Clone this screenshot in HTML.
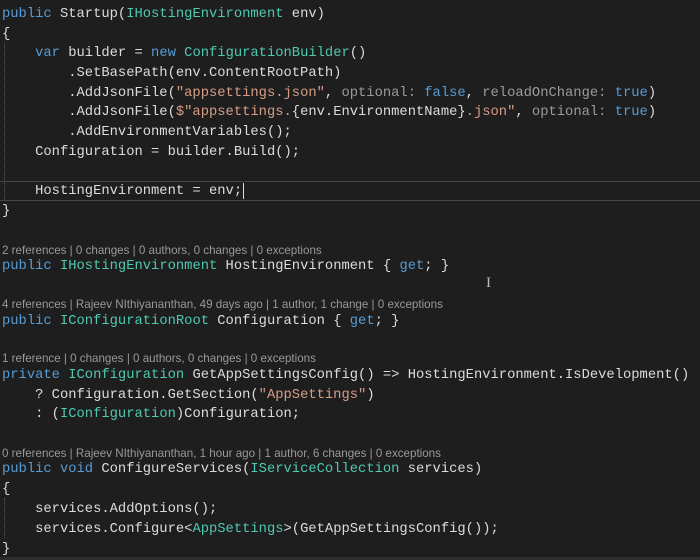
<!DOCTYPE html>
<html><head><style>
body{margin:0;width:700px;height:560px;background:#1e1e1e;overflow:hidden;position:relative}
.l{position:absolute;left:2px;height:20px;line-height:20px;white-space:pre;font-family:"Liberation Mono",monospace;font-size:13.8px;color:#dcdcdc;margin-top:2px}
.c{position:absolute;left:2px;height:14px;line-height:14px;white-space:pre;font-family:"Liberation Sans",sans-serif;font-size:11.6px;color:#999;margin-top:2px}
.k{color:#569cd6}.t{color:#4ec9b0}.s{color:#d69d85}.p{color:#9b9b9b}
.g{position:absolute;left:4px;width:0;border-left:1px dotted #5a5a5a}
</style></head><body>
<div style="position:absolute;left:0;right:0;top:181px;height:18px;border-top:1px solid #464646;border-bottom:1px solid #464646"></div>
<div style="position:absolute;left:243px;top:183px;width:1px;height:16px;background:#dcdcdc"></div>
<div class="g" style="top:43px;height:157px"></div>
<div class="g" style="top:498px;height:40px"></div>
<div class="l" style="top:3px"><span class="k">public</span> Startup(<span class="t">IHostingEnvironment</span> env)</div>
<div class="l" style="top:23px">{</div>
<div class="l" style="top:42px">    <span class="k">var</span> builder = <span class="k">new</span> <span class="t">ConfigurationBuilder</span>()</div>
<div class="l" style="top:62px">        .SetBasePath(env.ContentRootPath)</div>
<div class="l" style="top:82px">        .AddJsonFile(<span class="s">"appsettings.json"</span>, <span class="p">optional:</span> <span class="k">false</span>, <span class="p">reloadOnChange:</span> <span class="k">true</span>)</div>
<div class="l" style="top:101px">        .AddJsonFile(<span class="s">$"appsettings.</span>{env.EnvironmentName}<span class="s">.json"</span>, <span class="p">optional:</span> <span class="k">true</span>)</div>
<div class="l" style="top:121px">        .AddEnvironmentVariables();</div>
<div class="l" style="top:141px">    Configuration = builder.Build();</div>
<div class="l" style="top:180px">    HostingEnvironment = env;</div>
<div class="l" style="top:200px">}</div>
<div class="c" style="top:242px">2 references | 0 changes | 0 authors, 0 changes | 0 exceptions</div>
<div class="l" style="top:255px"><span class="k">public</span> <span class="t">IHostingEnvironment</span> HostingEnvironment { <span class="k">get</span>; }</div>
<div class="c" style="top:296px">4 references | Rajeev NIthiyananthan, 49 days ago | 1 author, 1 change | 0 exceptions</div>
<div class="l" style="top:310px"><span class="k">public</span> <span class="t">IConfigurationRoot</span> Configuration { <span class="k">get</span>; }</div>
<div class="c" style="top:350px">1 reference | 0 changes | 0 authors, 0 changes | 0 exceptions</div>
<div class="l" style="top:364px"><span class="k">private</span> <span class="t">IConfiguration</span> GetAppSettingsConfig() =&gt; HostingEnvironment.IsDevelopment()</div>
<div class="l" style="top:384px">    ? Configuration.GetSection(<span class="s">"AppSettings"</span>)</div>
<div class="l" style="top:403px">    : (<span class="t">IConfiguration</span>)Configuration;</div>
<div class="c" style="top:445px">0 references | Rajeev NIthiyananthan, 1 hour ago | 1 author, 6 changes | 0 exceptions</div>
<div class="l" style="top:458px"><span class="k">public</span> <span class="k">void</span> ConfigureServices(<span class="t">IServiceCollection</span> services)</div>
<div class="l" style="top:478px">{</div>
<div class="l" style="top:498px">    services.AddOptions();</div>
<div class="l" style="top:518px">    services.Configure&lt;<span class="t">AppSettings</span>&gt;(GetAppSettingsConfig());</div>
<div class="l" style="top:538px">}</div>
<div style="position:absolute;left:0;right:0;top:557px;height:3px;background:#2d2d2d"></div>
<div style="position:absolute;left:486px;top:275px;font-family:'Liberation Serif',serif;font-size:15px;color:#bbb;line-height:16px">I</div>
</body></html>
